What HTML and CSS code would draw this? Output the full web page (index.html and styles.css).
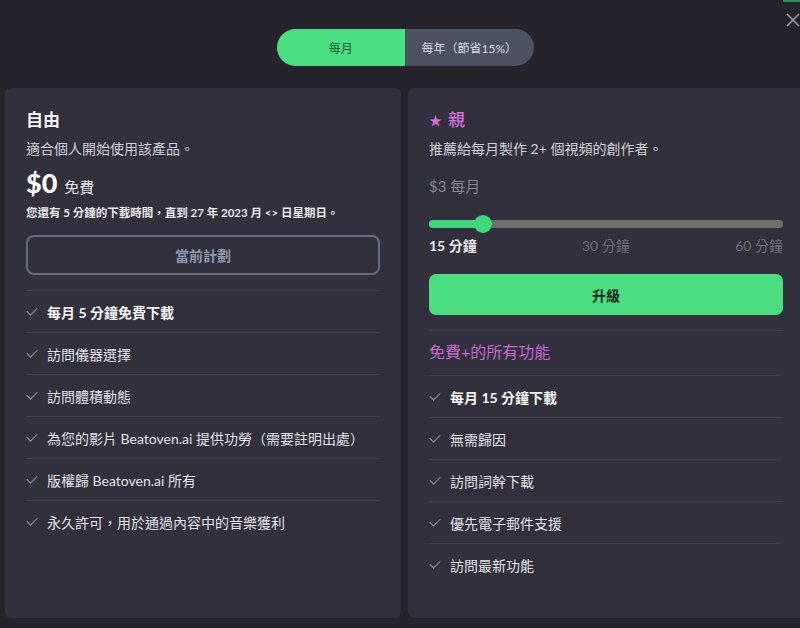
FILE: index.html
```html
<!DOCTYPE html>
<html lang="zh-Hant">
<head>
<meta charset="utf-8">
<link rel="stylesheet" href="styles.css">
</head>
<body>
<div class="topline"></div>
<button class="close" aria-label="close">
  <svg width="14" height="14" viewBox="0 0 14 14"><path d="M1 1L13 13M13 1L1 13" stroke="#9a9aa6" stroke-width="1.6" fill="none"/></svg>
</button>
<div class="toggle-wrap">
  <div class="toggle">
    <div class="opt active">每月</div>
    <div class="opt">每年（節省15%）</div>
  </div>
</div>
<div class="cards">
  <section class="card">
    <h2 class="title">自由</h2>
    <p class="desc">適合個人開始使用該產品。</p>
    <div class="price"><span class="big">$0</span><span class="unit">免費</span></div>
    <p class="note">您還有 5 分鐘的下載時間，直到 27 年 2023 月 &lt;&gt; 日星期日。</p>
    <div class="btn-outline">當前計劃</div>
    <ul class="features">
      <li class="bold"><span class="chk"></span>每月 5 分鐘免費下載</li>
      <li><span class="chk"></span>訪問儀器選擇</li>
      <li><span class="chk"></span>訪問體積動態</li>
      <li><span class="chk"></span>為您的影片 Beatoven.ai 提供功勞（需要註明出處）</li>
      <li><span class="chk"></span>版權歸 Beatoven.ai 所有</li>
      <li><span class="chk"></span>永久許可，用於通過內容中的音樂獲利</li>
    </ul>
  </section>
  <section class="card">
    <h2 class="title pro"><span class="star">★</span>親</h2>
    <p class="desc">推薦給每月製作 2+ 個視頻的創作者。</p>
    <div class="price-sub">$3 每月</div>
    <div class="slider"><div class="fill"></div><div class="thumb"></div></div>
    <div class="marks"><span class="on">15 分鐘</span><span>30 分鐘</span><span>60 分鐘</span></div>
    <div class="btn-green">升級</div>
    <div class="all">免費+的所有功能</div>
    <ul class="features">
      <li class="bold"><span class="chk"></span>每月 15 分鐘下載</li>
      <li><span class="chk"></span>無需歸因</li>
      <li><span class="chk"></span>訪問詞幹下載</li>
      <li><span class="chk"></span>優先電子郵件支援</li>
      <li><span class="chk"></span>訪問最新功能</li>
    </ul>
  </section>
</div>
</body>
</html>
```
FILE: styles.css
```css
* { box-sizing: border-box; }
html, body { margin: 0; padding: 0; }
body {
  width: 800px;
  height: 628px;
  overflow: hidden;
  background: #25242c;
  color: #e6e6ea;
  font-family: "Lato", "Noto Sans CJK TC", sans-serif;
  position: relative;
}
.topline {
  position: absolute;
  top: 0; right: 0;
  width: 17px; height: 2px;
  background: #2f8a55;
}
.close {
  position: absolute;
  top: 13px; right: -6px;
  width: 26px; height: 16px;
  padding: 0;
  border: 0;
  background: none;
}
.toggle-wrap {
  display: flex;
  justify-content: center;
  padding-top: 29px;
  padding-left: 10px;
}
.toggle {
  display: flex;
  width: 257px;
  height: 37px;
  border-radius: 19px;
  overflow: hidden;
  background: #4b5160;
}
.opt {
  flex: 1;
  display: flex;
  align-items: center;
  justify-content: center;
  font-size: 12px;
  color: #d8dae0;
}
.opt.active {
  background: #4ade80;
  color: #1f5a38;
}
.cards {
  display: flex;
  gap: 7px;
  padding-left: 5px;
  margin-top: 22px;
}
.card {
  flex: 0 0 396px;
  height: 530px;
  background: #31303c;
  border-radius: 6px;
  padding: 20px 21px 0;
}
.title {
  margin: 0;
  font-size: 17px;
  font-weight: 700;
  line-height: 24px;
  color: #f2f2f4;
}
.title.pro {
  color: #d070d8;
  font-weight: 500;
  display: flex;
  align-items: center;
}
.star { font-size: 13px; margin-right: 6px; }
.desc {
  margin: 6px 0 0;
  font-size: 14px;
  line-height: 22px;
  color: #cfcfd6;
}
.price {
  display: flex;
  align-items: baseline;
  margin-top: 6px;
  height: 32px;
}
.big { font-size: 27px; font-weight: 900; color: #fff; }
.unit { font-size: 15px; margin-left: 7px; color: #e4e4ea; }
.note {
  margin: 6px 0 0;
  font-size: 11.5px;
  font-weight: 700;
  line-height: 18px;
  color: #e8e8ec;
}
.btn-outline {
  margin-top: 13px;
  height: 40px;
  border: 2px solid #666d80;
  border-radius: 8px;
  display: flex;
  align-items: center;
  justify-content: center;
  font-size: 14px;
  font-weight: 700;
  color: #8f98ab;
}
.features {
  list-style: none;
  margin: 15px 0 0;
  padding: 0;
}
.features li {
  height: 42px;
  border-top: 1px solid #3f3e4a;
  display: flex;
  align-items: center;
  font-size: 14px;
  color: #e2e2e8;
}
.features li.bold { font-weight: 700; color: #f4f4f6; }
.chk {
  width: 10px;
  height: 6px;
  border-left: 1.5px solid #9a9aa4;
  border-bottom: 1.5px solid #9a9aa4;
  transform: rotate(-45deg);
  margin: -3px 10px 0 1px;
}
.price-sub {
  margin-top: 15px;
  font-size: 15px;
  line-height: 22px;
  color: #85858f;
}
.slider {
  position: relative;
  margin-top: 23px;
  height: 8px;
  border-radius: 4px;
  background: #6e6e70;
}
.fill {
  width: 54px;
  height: 8px;
  border-radius: 4px;
  background: #3fd77a;
}
.thumb {
  position: absolute;
  left: 45px; top: -5px;
  width: 18px; height: 18px;
  border-radius: 50%;
  background: #40d87c;
}
.marks {
  display: flex;
  justify-content: space-between;
  margin-top: 8px;
  font-size: 14px;
  line-height: 20px;
  color: #6f6f78;
}
.marks .on { color: #e6e6ea; font-weight: 700; }
.btn-green {
  margin-top: 18px;
  height: 41px;
  background: #4ade80;
  border-radius: 7px;
  display: flex;
  align-items: center;
  justify-content: center;
  font-size: 14px;
  font-weight: 700;
  color: #1b2a22;
}
.all {
  margin-top: 15px;
  border-top: 1px solid #3f3e4a;
  padding-top: 10px;
  font-size: 16px;
  line-height: 22px;
  color: #c46cd0;
}
.all + .features { margin-top: 12px; }
```
